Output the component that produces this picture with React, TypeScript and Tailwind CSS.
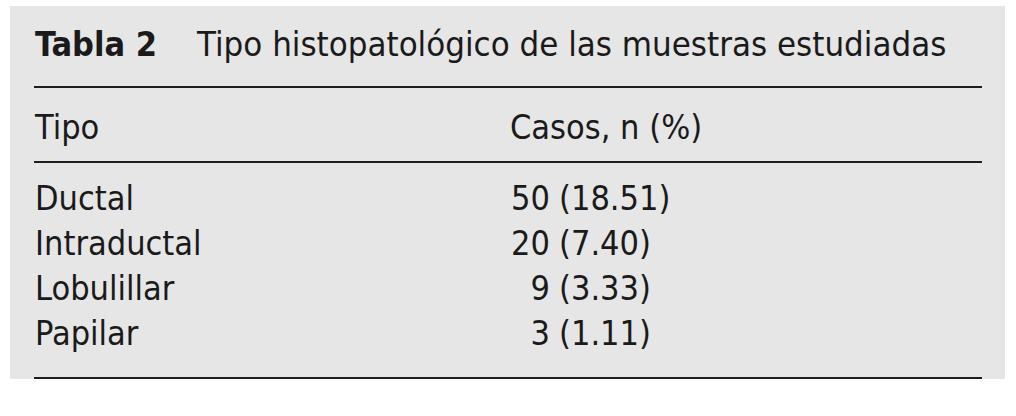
import React from 'react';

const rows = [
    { tipo: 'Ductal', n: '50', pct: '(18.51)' },
    { tipo: 'Intraductal', n: '20', pct: '(7.40)' },
    { tipo: 'Lobulillar', n: '9', pct: '(3.33)' },
    { tipo: 'Papilar', n: '3', pct: '(1.11)' },
];

const App: React.FC = () => {
    return (
        <div className="w-[1016px] h-[416px] bg-white pt-[6px] pl-[10px]">
            <div
                className="w-[995px] h-[373px] bg-[#e6e6e6] pl-[24px] pr-[23px] text-[#1a1a1a] text-[34px]"
                style={{ fontFamily: '"DejaVu Sans Condensed", "DejaVu Sans", sans-serif' }}
            >
                {/* Title */}
                <div className="h-[82px] pt-[18px] pl-px leading-[40px] border-b-[2px] border-[#1e1e1e] whitespace-nowrap">
                    <span className="font-bold">Tabla 2</span>
                    <span className="ml-[40px] text-[34.5px]">Tipo histopatológico de las muestras estudiadas</span>
                </div>

                {/* Header */}
                <div className="flex h-[75px] pt-[19px] pl-px leading-[40px] border-b-[2px] border-[#1e1e1e]">
                    <div className="w-[475px]">Tipo</div>
                    <div>Casos, n (%)</div>
                </div>

                {/* Body */}
                <div className="h-[216px] pt-[13px] pl-px border-b-[2px] border-[#1e1e1e]">
                    {rows.map((r) => (
                        <div key={r.tipo} className="flex leading-[45px] h-[45px]">
                            <div className="w-[475px]">{r.tipo}</div>
                            <div className="whitespace-nowrap">
                                <span className="inline-block w-[40px] text-right">{r.n}</span>
                                <span className="ml-[9px]">{r.pct}</span>
                            </div>
                        </div>
                    ))}
                </div>
            </div>
        </div>
    );
};

export default App;
